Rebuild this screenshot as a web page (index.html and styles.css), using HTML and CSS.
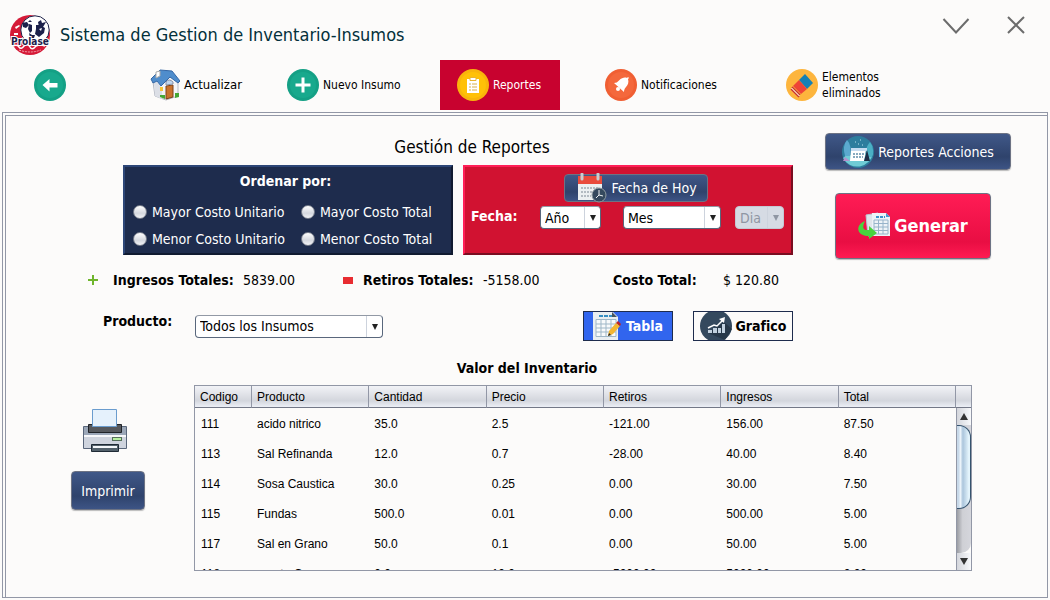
FILE: index.html
```html
<!DOCTYPE html>
<html lang="es">
<head>
<meta charset="utf-8">
<title>Sistema de Gestion de Inventario-Insumos</title>
<link rel="stylesheet" href="styles.css">
</head>
<body>
<div class="window">
<header class="titlebar">
  <svg class="logo" viewBox="0 0 40 40" aria-hidden="true">
    <circle cx="20" cy="20" r="20" fill="#d51a37"/>
    <circle cx="25" cy="15" r="14.2" fill="#fff" stroke="#1d2148" stroke-width="1"/>
    <path d="M12 8l5-1 2 3-3 3-3-1z M18 7l2-2 2 2z M28 7l3-2 1 3 4-1-3 5-4 0z" fill="#1c214b"/>
    <path d="M19 9l3 1 0 6-2 2-2-4z M26 10l4 0 5 3-1 5-5 4-4-3 1-5z" fill="#1c214b"/>
    <path d="M19 18l3 2 3 0-1 3-4 0z" fill="#1c214b"/>
    <path d="M29 14l3-1-1 3z" fill="#fff"/>
    <path d="M5 12l4-2 1 1-4 3z M4 18h4v2H4z" fill="#fff"/>
    <path d="M3 31q4-2 6 1t5-1q4-3 6 1t6-1q4-2 9 0" fill="none" stroke="#fff" stroke-width="1.500"/>
    <text class="logo-name" x="20" y="30" text-anchor="middle">Prolase</text>
    <path d="M9 35q11 4 22 0" fill="none" stroke="#f3a5ae" stroke-width="1" stroke-dasharray="2 1"/>
  </svg>
  <h1>Sistema de Gestion de Inventario-Insumos</h1>
  <button class="window-button" type="button" aria-label="Minimizar">
    <svg width="28" height="20" viewBox="0 0 28 20"><path d="M1.500 3L14 16.500 26.500 3" fill="none" stroke="#6c6c6c" stroke-width="2"/></svg>
  </button>
  <button class="window-button" type="button" aria-label="Cerrar">
    <svg width="20" height="20" viewBox="0 0 20 20"><path d="M2 1l16 16M18 1L2 17" fill="none" stroke="#6c6c6c" stroke-width="2"/></svg>
  </button>
</header>

<nav class="nav">
  <button class="nav-item" type="button" aria-label="Volver">
    <svg width="32" height="32" viewBox="0 0 32 32"><circle cx="16" cy="16" r="16" fill="#14a085"/><circle cx="16" cy="16" r="13" fill="#18a98d"/><path d="M8.500 16l7-6v4h8v4.500h-8v4z" fill="#fff"/></svg>
  </button>
  <button class="nav-item home" type="button">
    <svg width="30" height="32" viewBox="0 0 30 32">
      <path d="M3 13l9-7 11 3 5 5v13l-12 4-11-4z" fill="#f4f5f8" stroke="#b4b8c2"/>
      <path d="M4 14l2-2 6 7v11l-7-3z" fill="#dcdfe6"/>
      <path d="M1 10L10 1l12 1 8 10-2 2-8-6-9 9-4-5-4 2z" fill="#4f8dcc" stroke="#3567a5"/>
      <path d="M6 3l4-1v5L6 9z" fill="#fff" stroke="#aaa"/>
      <path d="M16 17l7-1v12l-7 2z" fill="#c9722d" stroke="#7c4219"/><path d="M16 13q3-4 7 0v2l-7 1z" fill="#bed5ee" stroke="#8a93a8"/>
      <path d="M10 18h3v4h-3z" fill="#f3c53b"/><path d="M10 26h5v4l-5-2z M25 24h4v4l-4 1z" fill="#45a735"/>
    </svg>
    <span>Actualizar</span>
  </button>
  <button class="nav-item" type="button">
    <svg width="32" height="32" viewBox="0 0 32 32"><circle cx="16" cy="16" r="16" fill="#14a085"/><circle cx="16" cy="16" r="13" fill="#18a98d"/><path d="M16 8.500v15M8.500 16h15" stroke="#fff" stroke-width="3"/></svg>
    <span>Nuevo Insumo</span>
  </button>
  <button class="nav-item active" type="button" aria-current="page">
    <svg width="32" height="32" viewBox="0 0 32 32"><circle cx="16" cy="16" r="16" fill="#f9b50b"/><circle cx="16" cy="16" r="13" fill="#ffc107"/><path d="M10 10h12v14H10z" fill="#fff"/><path d="M13 8.500h6v3h-6z" fill="#fff" stroke="#e9b530"/><path d="M12 15h2m1 0h5m-8 3h2m1 0h5m-8 3h2m1 0h5" stroke="#d9b04a"/></svg>
    <span>Reportes</span>
  </button>
  <button class="nav-item" type="button">
    <svg width="32" height="32" viewBox="0 0 32 32"><circle cx="16" cy="16" r="16" fill="#f05f33"/><circle cx="16" cy="16" r="13" fill="#f4683c"/><path d="M9 14q3 0 5-2.500c3-3 6-3.500 8-2.500l1-1 1 1-1 1c1 3 0 6-2 8-2 2-2 4-2 5z" fill="#fff"/><circle cx="13" cy="20" r="2" fill="#fff"/></svg>
    <span>Notificaciones</span>
  </button>
  <button class="nav-item" type="button">
    <svg width="32" height="32" viewBox="0 0 32 32"><circle cx="16" cy="16" r="16" fill="#fdb53d"/><path d="M19 5l8 9-6 6-8-9z" fill="#1580b5"/><path d="M13 11l8 9-6 5-8-8z" fill="#ee4437"/><path d="M6 18l8 8M5 20l8 8" fill="none" stroke="#c73238" stroke-width="1.500"/><path d="M5.500 19l8 8" stroke="#fff"/></svg>
    <span>Elementos<br>eliminados</span>
  </button>
</nav>

<main class="panel">
<div class="panel-body">
  <section class="filters">
    <div class="filters-main">
      <h2>Gestión de Reportes</h2>
      <div class="groups">
        <fieldset class="group order">
          <legend class="order-title">Ordenar por:</legend>
          <label><input type="radio" name="orden">Mayor Costo Unitario</label>
          <label><input type="radio" name="orden">Mayor Costo Total</label>
          <label><input type="radio" name="orden">Menor Costo Unitario</label>
          <label><input type="radio" name="orden">Menor Costo Total</label>
        </fieldset>
        <div class="group dates">
          <button class="button today" type="button">
            <svg width="30" height="30" viewBox="0 0 30 30"><path d="M1 5h24v22H1z" fill="#ecf0f1"/><path d="M1 3h24v8H1z" fill="#e94b3c"/><path d="M5 1v5M21 1v5" stroke="#c9cdd0" stroke-width="3" stroke-linecap="round"/><path d="M4 15h18M4 19h14M4 23h10" stroke="#b3bbc1" stroke-width="2" stroke-dasharray="2 1"/><circle cx="22" cy="22" r="7" fill="#34495e" stroke="#8e9aa0"/><path d="M22 17v5l4 1M22 22l-3 3" stroke="#ecf0f1" fill="none"/></svg>
            <span>Fecha de Hoy</span>
          </button>
          <div class="date-row">
            <span class="date-title">Fecha:</span>
            <span class="combo"><select aria-label="Año"><option>Año</option></select></span>
            <span class="combo month"><select aria-label="Mes"><option>Mes</option></select></span>
            <span class="combo disabled"><select aria-label="Dia" disabled><option>Dia</option></select></span>
          </div>
        </div>
      </div>
    </div>
    <div class="actions">
      <button class="button report-actions" type="button">
        <svg width="32" height="32" viewBox="0 0 32 32"><circle cx="16" cy="16" r="16" fill="#2d7d9d"/><path d="M1 22q4-5 10-2t12-2q5-3 8-1a16 16 0 0 1-30 5z" fill="#6fcbd5"/><path d="M5 4q5 5 3 16H3Q0 10 5 4z" fill="#5ba9cf"/><path d="M28 6q-5 5-4 15h6q3-9-2-15z" fill="#4bb0c4"/><path d="M9 14h15l-2 11H8z" fill="#fff"/><path d="M9 12h16v3H9z" fill="#c4dbf0"/><path d="M11 18h11M11 21h10" stroke="#87aabf" stroke-width="2" stroke-dasharray="2 1"/><path d="M25 14l3 11h-6z" fill="#1f2d46"/><path d="M3 21l5 4H1z" fill="#b391cc"/><path d="M13 6h1m4-2h1m1 5h1M16 8h1" stroke="#b9e3ed"/></svg>
        <span>Reportes Acciones</span>
      </button>
      <button class="button generate" type="button">
        <svg width="32" height="28" viewBox="0 0 32 28"><path d="M8 3l12-2 2 20-12 3z" fill="#dfe5eb" stroke="#bbc7d1"/><path d="M14 1h14l4 4v19H14z" fill="#edf3f7"/><path d="M28 1v4h4z" fill="#4398ce"/><path d="M18 5h9" stroke="#3b92ca" stroke-width="2" stroke-dasharray="3 1"/><path d="M16 8h14v14H16z M16 11.500h14M16 15h14M16 18.500h14M20.500 8v14M25 8v14" stroke="#97b4ca" fill="none"/><path d="M7 9C-3 13-2 24 11 24v3l8-6-8-7v4q-9 1-4-9z" fill="#48d33e"/></svg>
        <span>Generar</span>
      </button>
    </div>
  </section>

  <dl class="totals">
    <dt class="with-sign"><svg width="10" height="10" viewBox="0 0 10 10"><path d="M5 0v10M0 5h10" stroke="#6fb52c" stroke-width="2"/></svg>Ingresos Totales:</dt>
    <dd>5839.00</dd>
    <dt class="with-sign minus"><svg width="10" height="10" viewBox="0 0 10 10"><path d="M0 2h10v7H0z" fill="#e82c31"/></svg>Retiros Totales:</dt>
    <dd>-5158.00</dd>
    <dt>Costo Total:</dt>
    <dd>$ 120.80</dd>
  </dl>

  <section class="product-row">
    <label class="product-label" for="producto">Producto:</label>
    <span class="combo product"><select id="producto"><option>Todos los Insumos</option></select></span>
    <button class="view-button selected" type="button">
      <svg width="28" height="28" viewBox="0 0 28 28"><path d="M0 0h20l5 5v23H0z" fill="#e9eef1"/><path d="M19 0v5h5z" fill="#46545e"/><path d="M6 4h13" stroke="#378fc3" stroke-width="2" stroke-dasharray="4 1"/><path d="M3 7.500h20v17H3z M3 12h20M3 16h20M3 20h20M8 8v16M13 8v16M18 8v16" stroke="#9fb7c7" fill="#f8fafb"/><path d="M16 19l7-8 4 3-7 8-5 2z" fill="#f2b632"/><path d="M23 11l2-2 3 3-1 2z" fill="#bf2424"/><path d="M16 21l-1 3 3-1z" fill="#222"/></svg>
      <span>Tabla</span>
    </button>
    <button class="view-button" type="button">
      <svg width="32" height="28" viewBox="0 2 32 28"><circle cx="16" cy="16" r="16" fill="#34495e"/><path d="M24 12l8 7-7 11-17-7z" fill="#273849"/><path d="M8 20h4v3H8z M13 18h4v5h-4z M18 18h3v5h-3z M22 14h3v9h-3z" fill="#c2d1df"/><path d="M8 18l6-3 3 1 6-6" stroke="#fff" fill="none" stroke-width="1.500"/><path d="M19 9l6-2-1 6z" fill="#fff"/></svg>
      <span>Grafico</span>
    </button>
  </section>

  <section class="inventory">
    <h3>Valor del Inventario</h3>
    <div class="print">
      <svg width="44" height="44" viewBox="0 0 44 44"><path d="M.5 17.500h43v22H.5z" fill="#cfd4de" stroke="#59667a"/><path d="M1 18h42v8H1z" fill="#9ba7b8"/><path d="M1 26h42v2H1z" fill="#f7f8fb"/><path d="M5.500 15.500h33v8h-33z" fill="#55585d" stroke="#202328"/><path d="M9.500.5h24v17h-24z" fill="#e5f1fc" stroke="#6a9cce"/><path d="M29 28h10v4H29z" fill="#55705a"/><path d="M30 29h8v2h-8z" fill="#b8f0a2"/><path d="M8.500 35.500h27v7h-27z" fill="#53616b" stroke="#1f2a35"/><path d="M10 37h24v2H10z" fill="#f4f7fa"/></svg>
      <button class="button print-button" type="button">Imprimir</button>
    </div>
    <div class="table-frame">
      <div class="table-clip">
      <table>
        <colgroup><col class="code"><col><col><col><col><col><col></colgroup>
        <thead><tr><th>Codigo</th><th>Producto</th><th>Cantidad</th><th>Precio</th><th>Retiros</th><th>Ingresos</th><th>Total</th></tr></thead>
        <tbody>
          <tr><td>111</td><td>acido nitrico</td><td>35.0</td><td>2.5</td><td>-121.00</td><td>156.00</td><td>87.50</td></tr>
          <tr><td>113</td><td>Sal Refinanda</td><td>12.0</td><td>0.7</td><td>-28.00</td><td>40.00</td><td>8.40</td></tr>
          <tr><td>114</td><td>Sosa Caustica</td><td>30.0</td><td>0.25</td><td>0.00</td><td>30.00</td><td>7.50</td></tr>
          <tr><td>115</td><td>Fundas</td><td>500.0</td><td>0.01</td><td>0.00</td><td>500.00</td><td>5.00</td></tr>
          <tr><td>117</td><td>Sal en Grano</td><td>50.0</td><td>0.1</td><td>0.00</td><td>50.00</td><td>5.00</td></tr>
          <tr><td>118</td><td>manta C</td><td>0.0</td><td>10.0</td><td>-5000.00</td><td>5000.00</td><td>0.00</td></tr>
        </tbody>
      </table>
      </div>
      <div class="scroll-column">
        <div class="corner"></div>
        <div class="scrollbar">
          <button class="scroll-button up" type="button" aria-label="Subir"></button>
          <div class="track"><div class="thumb"></div></div>
          <button class="scroll-button down" type="button" aria-label="Bajar"></button>
        </div>
      </div>
    </div>
  </section>
</div>
</main>
</div>
</body>
</html>
```

FILE: styles.css
```css
* { box-sizing: border-box; }

body {
  margin: 0;
  background: #fcfbfa;
  color: #000;
  font: 14px/20px "DejaVu Sans Condensed", "DejaVu Sans", sans-serif;
}

button, select { font: inherit; color: inherit; }
button { border: 0; background: none; padding: 0; }
svg { display: block; flex: none; }
h1, h2, h3, dl, dd, fieldset { margin: 0; }

.window { display: flex; flex-direction: column; min-height: 100vh; padding-bottom: 2px; }

/* Title bar */
.titlebar { display: flex; align-items: center; height: 60px; padding: 10px 24px 0 10px; }
.logo { width: 40px; height: 40px; }
.logo-name { font: bold 10px "DejaVu Sans Condensed", sans-serif; fill: #1c214b; stroke: #fff; stroke-width: 2px; paint-order: stroke; }
h1 { flex: 1; margin-left: 10px; font-size: 18px; font-weight: 400; line-height: 24px; color: #03303a; }
.window-button { align-self: flex-start; margin: 6px 0 0 36px; }

/* Navigation */
.nav { display: grid; grid-template-columns: 116fr 137fr 170fr 148fr 181fr 281fr; height: 50px; padding-left: 17px; }
.nav-item { display: flex; align-items: center; gap: 4px; padding: 0 17px; font-size: 12px; line-height: 16px; text-align: left; white-space: nowrap; }
.nav-item.home { font-size: 13px; }
.nav-item.active { width: 120px; background: #c8022f; color: #fff; }

/* Main panel */
.panel { flex: 1; margin: 2px 2px 0; padding: 2px 0 0 2px; border: 1px solid #9297a6; display: flex; }
.panel-body { flex: 1; border: 1px solid #9297a6; border-width: 1px 0 0 1px; }

.filters { display: grid; grid-template-columns: 670fr 186fr; column-gap: 32px; padding: 17px 36px 0 117px; }
h2 { margin: 2px 0 6px 28px; font-size: 17px; line-height: 24px; font-weight: 400; text-align: center; }
.groups { display: grid; grid-template-columns: 1fr 1fr; gap: 10px; }
.group { height: 90px; border: 2px solid; color: #fff; }
.order {
  display: grid; grid-template-columns: 168fr 150fr; grid-template-rows: 31px 27px 27px;
  align-items: center; padding: 0 0 0 8px; min-width: 0;
  background: #1e2c4d; border-color: #2d4677 #101a30 #101a30 #2d4677;
}
.order-title { float: left; grid-column: 1 / -1; width: 100%; padding: 0 13px 3px 0; text-align: center; font-weight: 700; }
.order label { display: flex; align-items: center; gap: 5px; white-space: nowrap; }
.order input {
  appearance: none; flex: none; width: 14px; height: 14px; margin: 0; border: 1px solid #777d8b; border-radius: 50%;
  background: linear-gradient(#fff, #d5d8df 60%, #f2f3f6);
}
.dates { display: flex; flex-direction: column; padding: 7px 7px 0 6px; background: #d11231; border-color: #ff1f57 #790d20 #790d20 #ff1f57; }

.button {
  display: flex; align-items: center; justify-content: center; color: #fff; white-space: nowrap;
  border: 1px solid #6d7384; border-radius: 4px;
  background: linear-gradient(#405888, #2f436c 65%, #3d5485);
  box-shadow: 0 1px 1px #bbb;
}
.today { align-self: center; gap: 4px; width: 144px; height: 28px; margin-left: 17px; padding-left: 2px; box-shadow: none; }
.date-row { display: grid; grid-template-columns: 69fr 61fr 120fr 63fr; align-items: center; margin-top: 4px; }
.date-row .month { margin-left: 22px; }
.date-row .disabled { margin-left: 14px; }
.date-title { font-weight: 700; padding-bottom: 3px; }

/* Drop-downs */
.combo { position: relative; display: block; height: 23px; }
.combo select {
  appearance: none; display: block; width: 100%; height: 23px; padding: 0 20px 0 4px; line-height: 20px; color: #000;
  border: 1px solid #59677c; border-top-color: #9299a5; border-radius: 4px;
  background: linear-gradient(#cdd3dd, #cdd3dd) right 15px top / 1px 100% no-repeat, #fff;
}
.combo::after {
  content: ""; position: absolute; right: 5px; top: 9px;
  border: solid transparent; border-width: 6px 3px 0; border-top-color: #222;
}
.combo.disabled select { color: #8f96a3; opacity: 1; background-color: #d6dbe4; border-color: #c4c9d3; }
.combo.disabled::after { border-top-color: #8f96a3; }

.actions { display: flex; flex-direction: column; gap: 23px; }
.report-actions { gap: 4px; height: 37px; }
.generate { gap: 4px; height: 66px; margin: 0 20px 0 10px; font-size: 18px; font-weight: 700; background: linear-gradient(#ff1c55, #e90e43 75%, #ff1a52); }

/* Totals */
.totals { display: grid; grid-template-columns: 130fr 120fr 120fr 130fr 110fr 324fr; margin: 15px 0 0 107px; line-height: 20px; white-space: nowrap; }
.filters + .totals { margin-top: 11px; }
.totals dt { font-weight: 700; }
.with-sign { display: flex; align-items: center; gap: 15px; margin-left: -25px; }
.with-sign.minus { gap: 10px; margin-left: -20px; }

/* Product and view switch */
.product-row { display: grid; grid-template-columns: 92fr 188fr 200fr 90fr 20fr 100fr 254fr; margin-top: 21px; padding-left: 97px; align-items: center; }
.product-label { font-weight: 700; align-self: start; }
.product { top: auto; }
.view-button { grid-column: 4; display: flex; align-items: center; justify-content: center; gap: 5px; height: 30px; border: 1px solid #1e2c4d; font-weight: 700; }
.view-button:last-child { grid-column: 6; gap: 4px; }
.view-button.selected { background: #3165ee; color: #fff; }

/* Inventory */
.inventory { display: grid; grid-template-columns: 74fr 778fr; column-gap: 49px; padding: 17px 75px 0 65px; }
h3 { grid-column: 1 / -1; margin-bottom: 7px; padding-left: 11px; font-size: 14px; line-height: 20px; text-align: center; }
.print { display: flex; flex-direction: column; align-items: center; gap: 18px; padding-top: 24px; }
.print svg { margin-right: 6px; }
.print-button { width: 100%; height: 39px; }
.table-frame { display: flex; height: 186px; border: 1px solid #9297a6; font: 12px/16px "Liberation Sans", Arial, sans-serif; }
.table-clip { flex: 1; overflow: hidden; }
table { width: 100%; table-layout: fixed; border-collapse: separate; border-spacing: 0; }
.code { width: 57px; }
th, .corner { height: 22px; border-bottom: 1px solid #737887; background: linear-gradient(#f2f3f7, #dcdee4 50%, #d3d6dd 70%, #eceff6); }
th { padding: 0 5px; border-right: 1px solid #9297a6; font-weight: 400; text-align: left; }
td { height: 30px; padding: 2px 5px 0; white-space: nowrap; }
td:first-child { padding-left: 6px; }
.scroll-column { display: flex; flex-direction: column; width: 15px; }
.scrollbar { flex: 1; display: flex; flex-direction: column; border-left: 1px solid #9297a6; }
.scroll-button { display: flex; align-items: center; justify-content: center; height: 17px; background: linear-gradient(90deg, #d4d6dc, #f8f9fb); }
.scroll-button::before { content: ""; border: solid transparent; border-width: 0 4px 7px; border-bottom-color: #333; }
.scroll-button.down::before { border-width: 7px 4px 0; border-top-color: #333; }
.track { flex: 1; background: linear-gradient(90deg, #9b9da3, #cfd0d5 40%, #d5d6dc); border-bottom-right-radius: 10px; }
.thumb { height: 66%; border: 1px solid #36536e; border-left: 0; border-radius: 0 12px 12px 0; background: linear-gradient(90deg, #c8d9e9 15%, #f2f8fd 25%, #abc5dc 45%, #e4f4fc 90%); }
```
